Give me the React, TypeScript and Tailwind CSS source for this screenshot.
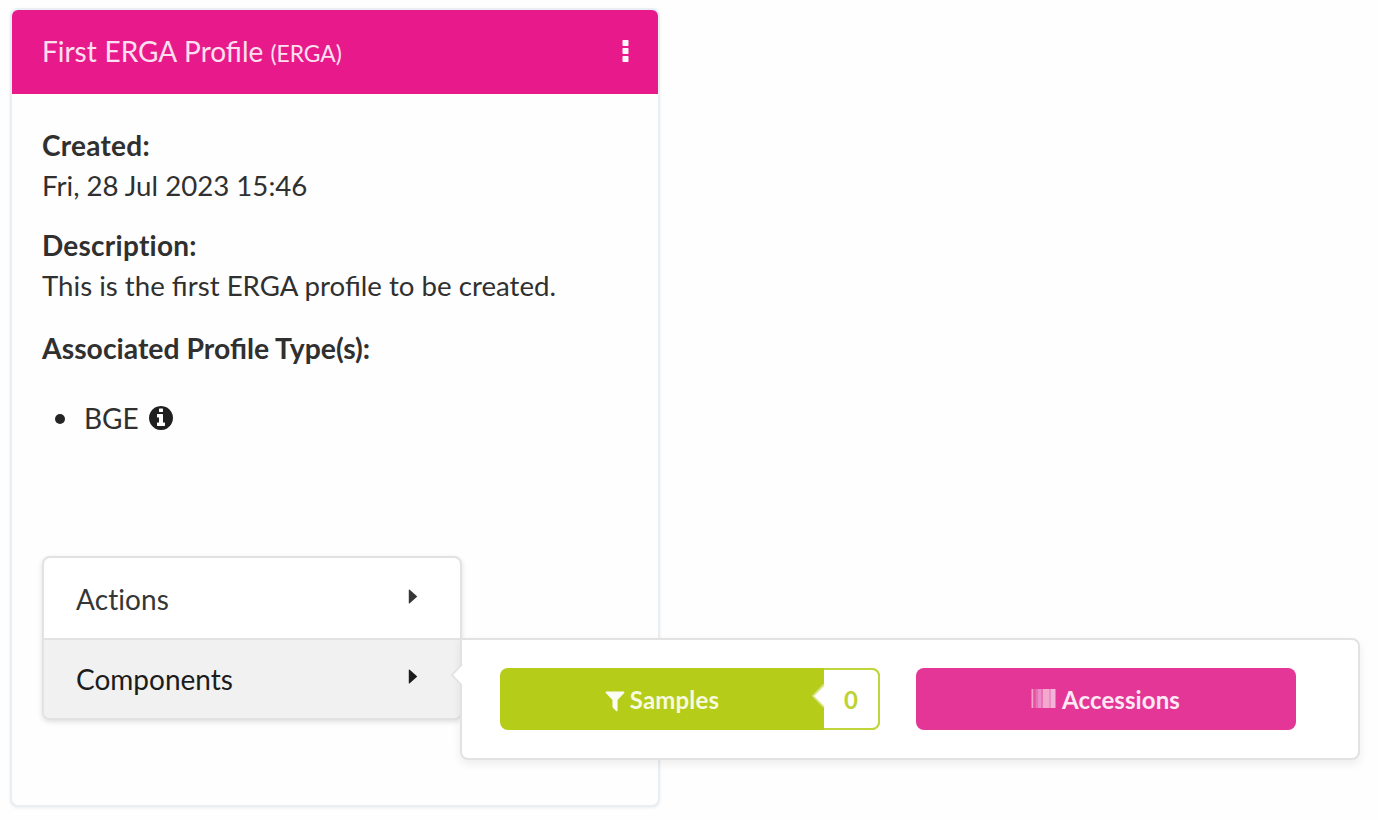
import type { ReactNode } from "react";

function FilterIcon() {
  return (
    <svg className="h-[25px] w-[24px] shrink-0" viewBox="0 0 1792 1792" preserveAspectRatio="none" fill="#fbfdf2" aria-hidden="true">
      <path d="M1595 295q17 41-14 70l-493 493v742q0 42-39 59-13 5-25 5-27 0-45-19l-256-256q-19-19-19-45v-486l-493-493q-31-29-14-70 17-39 59-39h1280q42 0 59 39z" />
    </svg>
  );
}

function InfoIcon() {
  return (
    <svg className="h-[28px] w-[28px]" viewBox="0 0 1792 1792" fill="currentColor" aria-hidden="true">
      <path d="M1152 1376v-160q0-14-9-23t-23-9h-96v-512q0-14-9-23t-23-9h-320q-14 0-23 9t-9 23v160q0 14 9 23t23 9h96v320h-96q-14 0-23 9t-9 23v160q0 14 9 23t23 9h448q14 0 23-9t9-23zm-128-896v-160q0-14-9-23t-23-9h-192q-14 0-23 9t-9 23v160q0 14 9 23t23 9h192q14 0 23-9t9-23zm640 416q0 209-103 385.5t-279.5 279.5-385.5 103-385.5-103-279.5-279.5-103-385.5 103-385.5 279.5-279.5 385.5-103 385.5 103 279.5 279.5 103 385.5z" />
    </svg>
  );
}

function BarcodeIcon() {
  return (
    <svg className="mt-[-3px] h-[19px] w-[25px] shrink-0" viewBox="0 0 25 20" preserveAspectRatio="none" aria-hidden="true">
      <rect x="0.5" width="2" height="20" fill="#f3a5c9" />
      <rect x="2.5" width="2" height="20" fill="#e650a3" />
      <rect x="4.5" width="2" height="20" fill="#ea72b5" />
      <rect x="6.5" width="3.5" height="20" fill="#ec8cc8" />
      <rect x="10" width="2" height="20" fill="#e873b6" />
      <rect x="12" width="6" height="20" fill="#f2a9cd" />
      <rect x="18" width="2" height="20" fill="#ed8fc3" />
      <rect x="20" width="4.5" height="20" fill="#f3b3da" />
    </svg>
  );
}

function Caret() {
  return (
    <svg className="mt-[-4px] h-[15px] w-[10px]" viewBox="0 0 10 16" fill="currentColor" aria-hidden="true">
      <path d="M0.5 1Q0.5 0 1.5 0.8L9 7.4Q9.8 8 9 8.6L1.5 15.2Q0.5 16 0.5 15z" />
    </svg>
  );
}

function Field({ label, children }: { label: string; children: ReactNode }) {
  return (
    <div>
      <div className="mt-[-1px] mb-px font-bold tracking-[0.25px] [font-variant-ligatures:none]">{label}</div>
      <div className="text-[27.65px]">{children}</div>
    </div>
  );
}

function ComponentsPopup() {
  return (
    <div className="absolute top-[80px] left-[416px] flex h-[122px] w-[900px] gap-[36px] rounded-[8px] rounded-tl-none border-2 border-[#e2e2e2] bg-white pt-[28px] pl-[38px] text-[24px] font-bold text-white shadow-[0_4px_8px_rgba(34,36,38,0.08)]">
      <svg className="absolute top-[24px] left-[-11px] h-[22px] w-[12px]" viewBox="0 0 12 22" aria-hidden="true">
        <path d="M12 0.5L1.5 11L12 21.5z" fill="white" />
        <path d="M11 0.5L1 11L11 21.5" fill="none" stroke="#e2e2e2" strokeWidth="1.7" />
      </svg>
      <button className="flex h-[62px] w-[380px] overflow-hidden rounded-[8px] bg-[#b5cc18]">
        <span className="flex h-full w-[324px] items-center justify-center gap-[3px] pt-[2px] pr-[2px] text-[#f6fadf]">
          <FilterIcon />
          <span className="tracking-[0.15px]">Samples</span>
        </span>
        <span className="relative flex h-full w-[56px] items-center justify-center rounded-r-[8px] border-y-2 border-r-2 border-[#c0d63c] bg-white pt-[2px] text-[#bdd234]">
          <svg className="absolute top-[14px] left-[-12px] h-[24px] w-[13px]" viewBox="0 0 13 24" aria-hidden="true">
            <path d="M12 0.5L1 11.8L12 23" fill="none" stroke="#d6e384" strokeWidth="2" />
            <path d="M13 1L2 12L13 23z" fill="white" />
          </svg>
          0
        </span>
      </button>
      <button className="flex h-[62px] w-[380px] items-center justify-center gap-[6px] rounded-[8px] bg-[#e33696] pt-[2px] pr-[1px] text-[#fde9f4]">
        <BarcodeIcon />
        <span className="tracking-[0.1px]">Accessions</span>
      </button>
    </div>
  );
}

function ProfileMenu() {
  return (
    <nav className="relative h-[164px] w-[420px] rounded-[8px] border-2 border-[#e2e2e2] bg-white shadow-[0_2px_5px_rgba(34,36,38,0.14)]">
      <div className="flex h-[80px] items-center justify-between pt-px pr-[42px] pl-[32px] text-[#363636]">
        <span className="tracking-[0.1px] [font-variant-ligatures:none]">Actions</span>
        <Caret />
      </div>
      <div className="flex h-[80px] items-center justify-between rounded-b-[6px] border-t-2 border-[#e2e2e2] bg-[#f1f1f1] pb-px pr-[42px] pl-[32px] text-[#1c1c1c]">
        <span>Components</span>
        <Caret />
      </div>
      <ComponentsPopup />
    </nav>
  );
}

export default function App() {
  return (
    <main className="h-[820px] w-[1378px] overflow-hidden bg-[#fefefe] pt-[8px] pl-[10px] font-['Lato',sans-serif] text-[28px] leading-[40px] text-[#303030]">
      <article className="flex h-[799px] w-[650px] flex-col rounded-[8px] border-2 border-[#e9eef2] bg-[#fefefe] shadow-[0_1px_3px_rgba(0,0,0,0.07)]">
        <header className="flex h-[84px] shrink-0 items-center justify-between rounded-t-[6px] bg-[#e81a8b] pr-[29px] pl-[30px] text-[#fde0ef]">
          <h1>
            <span className="[word-spacing:0.6px]">First ERGA Profile</span> <span className="text-[22.8px]">(ERGA)</span>
          </h1>
          <svg className="mt-[-2px] h-[24px] w-[7px]" viewBox="0 0 7 24" fill="#fff6fa" aria-hidden="true">
            <rect x="0.5" y="1" width="6" height="6" rx="0.7" />
            <rect x="0.5" y="9" width="6" height="6" rx="0.7" />
            <rect x="0.5" y="17" width="6" height="6" rx="0.7" />
          </svg>
        </header>
        <div className="flex flex-col pt-[32px] pl-[30px]">
          <div className="flex flex-col gap-[20px]">
            <Field label="Created:">Fri, 28 Jul 2023 15:46</Field>
            <Field label="Description:">This is the first ERGA profile to be created.</Field>
          </div>
          <h2 className="mt-[22px] text-[28.35px] font-bold">Associated Profile Type(s):</h2>
          <ul className="mt-[30px]">
            <li className="flex items-center">
              <span className="mt-[2px] ml-[13px] h-[10px] w-[10px] rounded-full bg-[#252525]" />
              <span className="ml-[19px]">BGE</span>
              <span className="ml-[8px] text-[#1f1f1f]">
                <InfoIcon />
              </span>
            </li>
          </ul>
          <div className="mt-[118px]">
            <ProfileMenu />
          </div>
        </div>
      </article>
    </main>
  );
}
